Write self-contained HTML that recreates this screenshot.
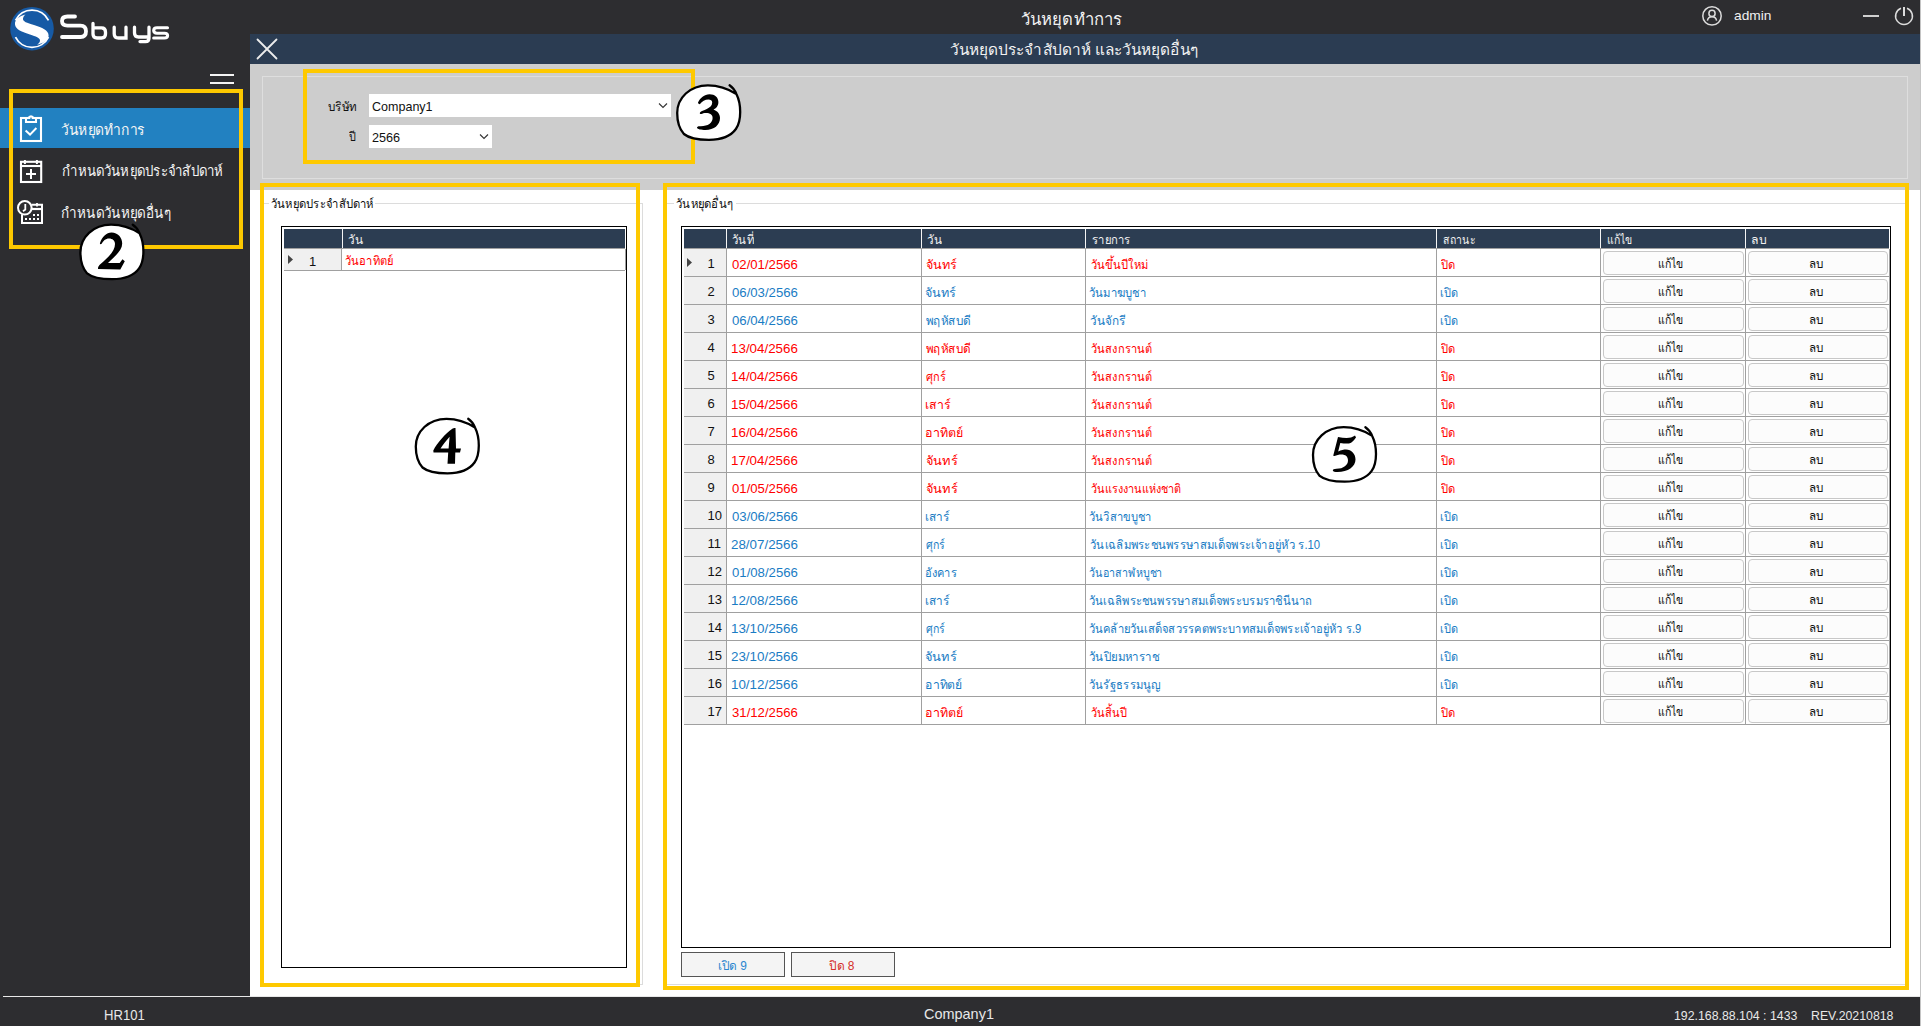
<!DOCTYPE html>
<html><head><meta charset="utf-8">
<style>
*{box-sizing:border-box;margin:0;padding:0}
html,body{width:1921px;height:1026px;overflow:hidden}
body{position:relative;background:#2d2d30;font-family:"Liberation Sans",sans-serif;color:#fff}
.a{position:absolute}
.t{position:absolute;white-space:nowrap;line-height:1}
.yb{position:absolute;border:4px solid #fec900}
</style></head><body>
<svg class="a" style="left:0;top:0" width="180" height="56" viewBox="0 0 180 56">
<circle cx="32" cy="28.7" r="21.8" fill="#165aa5"/>
<path d="M15.5 20.3 A18.4 18.4 0 0 1 48.5 20.3" fill="none" stroke="#fff" stroke-width="1.8"/>
<path d="M15.5 37.1 A18.4 18.4 0 0 0 48.5 37.1" fill="none" stroke="#fff" stroke-width="1.8"/>
<path d="M25.5 14.5 C19 16 14.5 20 15 24.5 C15.5 29.5 22 32 30 34.5 C36 36.5 40 38 40 40.5 C40 42.5 38.3 44 37 44.7 C44 43.5 48.6 39.5 48.6 35.5 C48.6 30 42 27.5 34 25 C27 23 22.5 21.5 23 18.5 C23.3 16.5 24.5 15.2 25.5 14.5 Z" fill="#fff"/>
<g fill="none" stroke="#fff" stroke-linecap="round">
<path d="M75 16.5 H67.5 Q62 16.5 62 21 Q62 25.6 67.5 25.6 H80.5 Q86 25.6 86 31.3 Q86 37 80.5 37 H62" stroke-width="3.8"/>
<path d="M93 23.5 V34 Q93 38 97 38 H101.5 Q105.5 38 105.5 34 V32 Q105.5 27.8 101.5 27.8 H93" stroke-width="3.3"/>
<path d="M114.2 27.2 V33.8 Q114.2 38 118.5 38 H126 V27.2" stroke-width="3.3"/>
<path d="M134.5 27.2 V33 Q134.5 37 138.5 37 H149 M149 27.2 V38.3 Q149 41.6 145.5 41.6 H140" stroke-width="3.3"/>
<path d="M167.5 27.8 H157 Q153.7 27.8 153.7 30.6 Q153.7 33.2 157 33.2 H164.5 Q167.6 33.2 167.6 35.6 Q167.6 38 164.5 38 H153.7" stroke-width="3.1"/>
</g></svg>
<div class="t" style="left:1020.99px;top:11px;font-size:16.5px;color:#f2f2f2;transform:scaleX(1.0101);transform-origin:0 0;">วันหยุดทำการ</div>
<svg class="a" style="left:1700px;top:4px" width="24" height="24" viewBox="1700 4 24 24" fill="none" stroke="#dcdcdc" stroke-width="1.5">
<circle cx="1712" cy="15.9" r="9.2"/><circle cx="1712" cy="13.4" r="3.1"/><path d="M1707.4 20.6 A4.7 4.7 0 0 1 1716.6 20.6"/></svg>
<div class="t" style="left:1734.49px;top:9px;font-size:13.5px;color:#f0f0f0;transform:scaleX(1.0170);transform-origin:0 0;">admin</div>
<div class="a" style="left:1863px;top:15px;width:16px;height:2px;background:#d0d0d0"></div>
<svg class="a" style="left:1892px;top:4px" width="24" height="24" viewBox="1892 4 24 24" fill="none" stroke="#dcdcdc" stroke-width="1.5">
<path d="M1901 8.2 A8.4 8.4 0 1 0 1907 8.2"/><path d="M1904 7 V16" stroke-width="2"/></svg>
<div class="a" style="left:210px;top:74px;width:24px;height:2px;background:#f4f4f4"></div>
<div class="a" style="left:210px;top:82px;width:24px;height:2px;background:#f4f4f4"></div>
<div class="a" style="left:0;top:108px;width:250px;height:40px;background:#2281c1"></div>
<svg class="a" style="left:0;top:100px" width="60" height="130" viewBox="0 100 60 130" fill="none" stroke="#fff" stroke-width="2.1">
<rect x="21" y="118" width="20" height="23"/>
<path d="M26 118 V122 H36 V118" /><path d="M28.5 118 A2.6 2.6 0 0 1 33.5 118" stroke-width="1.8"/><rect x="30.3" y="117.6" width="1.4" height="1.6" fill="#2281c1" stroke="none"/>
<path d="M25.6 130.6 L30 134.6 L36.4 128" stroke-width="2"/>
<rect x="21" y="161.8" width="20.2" height="20.2"/>
<path d="M21 166 H41"/><path d="M24.9 160 V164 M36.9 160 V164" stroke-width="2"/>
<path d="M26 174 H36 M31 169 V179" stroke-width="2"/>
<circle cx="24.8" cy="207.8" r="6.8" stroke-width="2"/>
<path d="M25.3 204 V209.5 L23 211.2" stroke-width="1.8"/>
<path d="M31.5 204.8 H42 V223 H22 V214.5" stroke-width="2"/>
<path d="M31.5 209 H42" stroke-width="2.2"/><path d="M37 203 V206.6" stroke-width="1.8"/>
</svg>
<svg class="a" style="left:20px;top:210px" width="24" height="14" viewBox="20 210 24 14" fill="#fff">
<rect x="33" y="214" width="2" height="2"/><rect x="37" y="214" width="2" height="2"/>
<rect x="25" y="218" width="2" height="2"/><rect x="29" y="218" width="2" height="2"/><rect x="33" y="218" width="2" height="2"/><rect x="37" y="218" width="2" height="2"/></svg>
<div class="t" style="left:60.64px;top:123px;font-size:14.5px;color:#f4f4f4;transform:scaleX(0.9542);transform-origin:0 0;">วันหยุดทำการ</div>
<div class="t" style="left:62.07px;top:164px;font-size:14.5px;color:#f4f4f4;transform:scaleX(0.9122);transform-origin:0 0;">กำหนดวันหยุดประจำสัปดาห์</div>
<div class="t" style="left:61.07px;top:206px;font-size:14.5px;color:#f4f4f4;transform:scaleX(0.9328);transform-origin:0 0;">กำหนดวันหยุดอื่นๆ</div>
<div class="yb" style="left:9px;top:89px;width:234px;height:160px"></div>
<div class="a" style="left:3px;top:996px;width:1918px;height:1px;background:#e8e8e8"></div>
<div class="a" style="left:250px;top:34px;width:1670px;height:30px;background:#2b3c52"></div>
<svg class="a" style="left:254px;top:36px" width="26" height="26" viewBox="254 36 26 26" stroke="#ececec" stroke-width="1.8" stroke-linecap="round">
<path d="M257.5 39.5 L276.5 58.5 M276.5 39.5 L257.5 58.5"/></svg>
<div class="t" style="left:949.60px;top:42px;font-size:15.3px;color:#f2f2f2;transform:scaleX(1.0057);transform-origin:0 0;">วันหยุดประจำสัปดาห์ และวันหยุดอื่นๆ</div>
<div class="a" style="left:250px;top:64px;width:1670px;height:126px;background:#cdcdcd"></div>
<div class="a" style="left:262px;top:76px;width:1646px;height:103px;border:1px solid #dedede"></div>
<div class="t" style="left:328.00px;top:101px;font-size:12.5px;color:#111;transform:scaleX(0.9299);transform-origin:0 0;">บริษัท</div>
<div class="t" style="left:349.14px;top:131px;font-size:12.5px;color:#111;transform:scaleX(0.8657);transform-origin:0 0;">ปี</div>
<div class="a" style="left:369px;top:94px;width:302px;height:23px;background:#fff"></div>
<div class="t" style="left:372.20px;top:100px;font-size:13px;color:#111;transform:scaleX(0.9635);transform-origin:0 0;">Company1</div>
<div class="a" style="left:369px;top:125px;width:123px;height:23px;background:#fff"></div>
<div class="t" style="left:371.70px;top:131px;font-size:13px;color:#111;transform:scaleX(0.9736);transform-origin:0 0;">2566</div>
<svg class="a" style="left:650px;top:96px" width="20" height="20" viewBox="650 96 20 20" fill="none" stroke="#333" stroke-width="1.1"><path d="M659 103.5 L663 107.5 L667 103.5"/></svg>
<svg class="a" style="left:472px;top:127px" width="20" height="20" viewBox="472 127 20 20" fill="none" stroke="#333" stroke-width="1.1"><path d="M480 134.5 L484 138.5 L488 134.5"/></svg>
<div class="yb" style="left:303px;top:69px;width:392px;height:95px"></div>
<div class="a" style="left:250px;top:190px;width:1670px;height:806px;background:#fff"></div>
<div class="a" style="left:681px;top:226px;width:1210px;height:722px;border:1px solid #000;background:#fff"></div>
<div class="a" style="left:684px;top:229px;width:1205px;height:19px;background:#2c3d52"></div>
<div class="a" style="left:726px;top:229px;width:1px;height:19px;background:#f4f4f4"></div>
<div class="a" style="left:921px;top:229px;width:1px;height:19px;background:#f4f4f4"></div>
<div class="a" style="left:1085px;top:229px;width:1px;height:19px;background:#f4f4f4"></div>
<div class="a" style="left:1436px;top:229px;width:1px;height:19px;background:#f4f4f4"></div>
<div class="a" style="left:1600px;top:229px;width:1px;height:19px;background:#f4f4f4"></div>
<div class="a" style="left:1745px;top:229px;width:1px;height:19px;background:#f4f4f4"></div>
<div class="t" style="left:732.49px;top:234px;font-size:12.5px;color:#f0f0f0;transform:scaleX(0.9139);transform-origin:0 0;">วันที่</div>
<div class="t" style="left:927.00px;top:234px;font-size:12.5px;color:#f0f0f0;transform:scaleX(0.9375);transform-origin:0 0;">วัน</div>
<div class="t" style="left:1092.00px;top:234px;font-size:12.5px;color:#f0f0f0;transform:scaleX(0.9001);transform-origin:0 0;">รายการ</div>
<div class="t" style="left:1442.95px;top:234px;font-size:12.5px;color:#f0f0f0;transform:scaleX(0.8358);transform-origin:0 0;">สถานะ</div>
<div class="t" style="left:1606.67px;top:234px;font-size:12.5px;color:#f0f0f0;transform:scaleX(0.8382);transform-origin:0 0;">แก้ไข</div>
<div class="t" style="left:1750.61px;top:234px;font-size:12.5px;color:#f0f0f0;transform:scaleX(0.9787);transform-origin:0 0;">ลบ</div>
<div class="a" style="left:684px;top:248px;width:1205px;height:1px;background:#a0a0a0"></div>
<div class="a" style="left:684px;top:249px;width:42px;height:476px;background:#f0f0f0"></div>
<div class="a" style="left:684px;top:276px;width:1205px;height:1px;background:#a0a0a0"></div>
<div class="t" style="left:707.5px;top:257px;font-size:13px;color:#111">1</div>
<div class="t" style="left:731.79px;top:258px;font-size:13px;color:#ff0000;transform:scaleX(1.0127);transform-origin:0 0;">02/01/2566</div>
<div class="t" style="left:926.03px;top:259px;font-size:12.5px;color:#ff0000;transform:scaleX(1.0088);transform-origin:0 0;">จันทร์</div>
<div class="t" style="left:1090.60px;top:259px;font-size:12.5px;color:#ff0000;transform:scaleX(0.8922);transform-origin:0 0;">วันขึ้นปีใหม่</div>
<div class="t" style="left:1441.00px;top:259px;font-size:12.5px;color:#ff0000;transform:scaleX(0.8955);transform-origin:0 0;">ปิด</div>
<div class="a" style="left:1603px;top:251px;width:141px;height:24px;border:1px solid #c8c8c8;border-radius:4px;background:#fcfcfc"></div>
<div class="a" style="left:1748px;top:251px;width:140px;height:24px;border:1px solid #c8c8c8;border-radius:4px;background:#fcfcfc"></div>
<div class="t" style="left:1658.26px;top:258px;font-size:12.5px;color:#111;transform:scaleX(0.8382);transform-origin:0 0;">แก้ไข</div>
<div class="t" style="left:1809.47px;top:258px;font-size:12.5px;color:#111;transform:scaleX(0.9286);transform-origin:0 0;">ลบ</div>
<div class="a" style="left:684px;top:304px;width:1205px;height:1px;background:#a0a0a0"></div>
<div class="t" style="left:707.5px;top:285px;font-size:13px;color:#111">2</div>
<div class="t" style="left:731.81px;top:286px;font-size:13px;color:#1a7cc4;transform:scaleX(1.0125);transform-origin:0 0;">06/03/2566</div>
<div class="t" style="left:925.00px;top:287px;font-size:12.5px;color:#1a7cc4;transform:scaleX(1.0067);transform-origin:0 0;">จันทร์</div>
<div class="t" style="left:1088.71px;top:287px;font-size:12.5px;color:#1a7cc4;transform:scaleX(0.9021);transform-origin:0 0;">วันมาฆบูชา</div>
<div class="t" style="left:1440.12px;top:287px;font-size:12.5px;color:#1a7cc4;transform:scaleX(0.8751);transform-origin:0 0;">เปิด</div>
<div class="a" style="left:1603px;top:279px;width:141px;height:24px;border:1px solid #c8c8c8;border-radius:4px;background:#fcfcfc"></div>
<div class="a" style="left:1748px;top:279px;width:140px;height:24px;border:1px solid #c8c8c8;border-radius:4px;background:#fcfcfc"></div>
<div class="t" style="left:1658.26px;top:286px;font-size:12.5px;color:#111;transform:scaleX(0.8382);transform-origin:0 0;">แก้ไข</div>
<div class="t" style="left:1809.47px;top:286px;font-size:12.5px;color:#111;transform:scaleX(0.9286);transform-origin:0 0;">ลบ</div>
<div class="a" style="left:684px;top:332px;width:1205px;height:1px;background:#a0a0a0"></div>
<div class="t" style="left:707.5px;top:313px;font-size:13px;color:#111">3</div>
<div class="t" style="left:731.81px;top:314px;font-size:13px;color:#1a7cc4;transform:scaleX(1.0125);transform-origin:0 0;">06/04/2566</div>
<div class="t" style="left:926.00px;top:315px;font-size:12.5px;color:#1a7cc4;transform:scaleX(0.9353);transform-origin:0 0;">พฤหัสบดี</div>
<div class="t" style="left:1089.67px;top:315px;font-size:12.5px;color:#1a7cc4;transform:scaleX(0.9385);transform-origin:0 0;">วันจักรี</div>
<div class="t" style="left:1440.12px;top:315px;font-size:12.5px;color:#1a7cc4;transform:scaleX(0.8751);transform-origin:0 0;">เปิด</div>
<div class="a" style="left:1603px;top:307px;width:141px;height:24px;border:1px solid #c8c8c8;border-radius:4px;background:#fcfcfc"></div>
<div class="a" style="left:1748px;top:307px;width:140px;height:24px;border:1px solid #c8c8c8;border-radius:4px;background:#fcfcfc"></div>
<div class="t" style="left:1658.26px;top:314px;font-size:12.5px;color:#111;transform:scaleX(0.8382);transform-origin:0 0;">แก้ไข</div>
<div class="t" style="left:1809.47px;top:314px;font-size:12.5px;color:#111;transform:scaleX(0.9286);transform-origin:0 0;">ลบ</div>
<div class="a" style="left:684px;top:360px;width:1205px;height:1px;background:#a0a0a0"></div>
<div class="t" style="left:707.5px;top:341px;font-size:13px;color:#111">4</div>
<div class="t" style="left:730.76px;top:342px;font-size:13px;color:#ff0000;transform:scaleX(1.0288);transform-origin:0 0;">13/04/2566</div>
<div class="t" style="left:926.00px;top:343px;font-size:12.5px;color:#ff0000;transform:scaleX(0.9345);transform-origin:0 0;">พฤหัสบดี</div>
<div class="t" style="left:1090.60px;top:343px;font-size:12.5px;color:#ff0000;transform:scaleX(0.8871);transform-origin:0 0;">วันสงกรานต์</div>
<div class="t" style="left:1441.00px;top:343px;font-size:12.5px;color:#ff0000;transform:scaleX(0.8955);transform-origin:0 0;">ปิด</div>
<div class="a" style="left:1603px;top:335px;width:141px;height:24px;border:1px solid #c8c8c8;border-radius:4px;background:#fcfcfc"></div>
<div class="a" style="left:1748px;top:335px;width:140px;height:24px;border:1px solid #c8c8c8;border-radius:4px;background:#fcfcfc"></div>
<div class="t" style="left:1658.26px;top:342px;font-size:12.5px;color:#111;transform:scaleX(0.8382);transform-origin:0 0;">แก้ไข</div>
<div class="t" style="left:1809.47px;top:342px;font-size:12.5px;color:#111;transform:scaleX(0.9286);transform-origin:0 0;">ลบ</div>
<div class="a" style="left:684px;top:388px;width:1205px;height:1px;background:#a0a0a0"></div>
<div class="t" style="left:707.5px;top:369px;font-size:13px;color:#111">5</div>
<div class="t" style="left:730.76px;top:370px;font-size:13px;color:#ff0000;transform:scaleX(1.0288);transform-origin:0 0;">14/04/2566</div>
<div class="t" style="left:926.03px;top:371px;font-size:12.5px;color:#ff0000;transform:scaleX(0.8792);transform-origin:0 0;">ศุกร์</div>
<div class="t" style="left:1090.60px;top:371px;font-size:12.5px;color:#ff0000;transform:scaleX(0.8871);transform-origin:0 0;">วันสงกรานต์</div>
<div class="t" style="left:1441.00px;top:371px;font-size:12.5px;color:#ff0000;transform:scaleX(0.8955);transform-origin:0 0;">ปิด</div>
<div class="a" style="left:1603px;top:363px;width:141px;height:24px;border:1px solid #c8c8c8;border-radius:4px;background:#fcfcfc"></div>
<div class="a" style="left:1748px;top:363px;width:140px;height:24px;border:1px solid #c8c8c8;border-radius:4px;background:#fcfcfc"></div>
<div class="t" style="left:1658.26px;top:370px;font-size:12.5px;color:#111;transform:scaleX(0.8382);transform-origin:0 0;">แก้ไข</div>
<div class="t" style="left:1809.47px;top:370px;font-size:12.5px;color:#111;transform:scaleX(0.9286);transform-origin:0 0;">ลบ</div>
<div class="a" style="left:684px;top:416px;width:1205px;height:1px;background:#a0a0a0"></div>
<div class="t" style="left:707.5px;top:397px;font-size:13px;color:#111">6</div>
<div class="t" style="left:730.76px;top:398px;font-size:13px;color:#ff0000;transform:scaleX(1.0288);transform-origin:0 0;">15/04/2566</div>
<div class="t" style="left:925.02px;top:399px;font-size:12.5px;color:#ff0000;transform:scaleX(0.9839);transform-origin:0 0;">เสาร์</div>
<div class="t" style="left:1090.60px;top:399px;font-size:12.5px;color:#ff0000;transform:scaleX(0.8871);transform-origin:0 0;">วันสงกรานต์</div>
<div class="t" style="left:1441.00px;top:399px;font-size:12.5px;color:#ff0000;transform:scaleX(0.8955);transform-origin:0 0;">ปิด</div>
<div class="a" style="left:1603px;top:391px;width:141px;height:24px;border:1px solid #c8c8c8;border-radius:4px;background:#fcfcfc"></div>
<div class="a" style="left:1748px;top:391px;width:140px;height:24px;border:1px solid #c8c8c8;border-radius:4px;background:#fcfcfc"></div>
<div class="t" style="left:1658.26px;top:398px;font-size:12.5px;color:#111;transform:scaleX(0.8382);transform-origin:0 0;">แก้ไข</div>
<div class="t" style="left:1809.47px;top:398px;font-size:12.5px;color:#111;transform:scaleX(0.9286);transform-origin:0 0;">ลบ</div>
<div class="a" style="left:684px;top:444px;width:1205px;height:1px;background:#a0a0a0"></div>
<div class="t" style="left:707.5px;top:425px;font-size:13px;color:#111">7</div>
<div class="t" style="left:730.76px;top:426px;font-size:13px;color:#ff0000;transform:scaleX(1.0288);transform-origin:0 0;">16/04/2566</div>
<div class="t" style="left:924.98px;top:427px;font-size:12.5px;color:#ff0000;transform:scaleX(0.9993);transform-origin:0 0;">อาทิตย์</div>
<div class="t" style="left:1090.60px;top:427px;font-size:12.5px;color:#ff0000;transform:scaleX(0.8871);transform-origin:0 0;">วันสงกรานต์</div>
<div class="t" style="left:1441.00px;top:427px;font-size:12.5px;color:#ff0000;transform:scaleX(0.8955);transform-origin:0 0;">ปิด</div>
<div class="a" style="left:1603px;top:419px;width:141px;height:24px;border:1px solid #c8c8c8;border-radius:4px;background:#fcfcfc"></div>
<div class="a" style="left:1748px;top:419px;width:140px;height:24px;border:1px solid #c8c8c8;border-radius:4px;background:#fcfcfc"></div>
<div class="t" style="left:1658.26px;top:426px;font-size:12.5px;color:#111;transform:scaleX(0.8382);transform-origin:0 0;">แก้ไข</div>
<div class="t" style="left:1809.47px;top:426px;font-size:12.5px;color:#111;transform:scaleX(0.9286);transform-origin:0 0;">ลบ</div>
<div class="a" style="left:684px;top:472px;width:1205px;height:1px;background:#a0a0a0"></div>
<div class="t" style="left:707.5px;top:453px;font-size:13px;color:#111">8</div>
<div class="t" style="left:730.76px;top:454px;font-size:13px;color:#ff0000;transform:scaleX(1.0288);transform-origin:0 0;">17/04/2566</div>
<div class="t" style="left:926.00px;top:455px;font-size:12.5px;color:#ff0000;transform:scaleX(1.0272);transform-origin:0 0;">จันทร์</div>
<div class="t" style="left:1090.60px;top:455px;font-size:12.5px;color:#ff0000;transform:scaleX(0.8871);transform-origin:0 0;">วันสงกรานต์</div>
<div class="t" style="left:1441.00px;top:455px;font-size:12.5px;color:#ff0000;transform:scaleX(0.8955);transform-origin:0 0;">ปิด</div>
<div class="a" style="left:1603px;top:447px;width:141px;height:24px;border:1px solid #c8c8c8;border-radius:4px;background:#fcfcfc"></div>
<div class="a" style="left:1748px;top:447px;width:140px;height:24px;border:1px solid #c8c8c8;border-radius:4px;background:#fcfcfc"></div>
<div class="t" style="left:1658.26px;top:454px;font-size:12.5px;color:#111;transform:scaleX(0.8382);transform-origin:0 0;">แก้ไข</div>
<div class="t" style="left:1809.47px;top:454px;font-size:12.5px;color:#111;transform:scaleX(0.9286);transform-origin:0 0;">ลบ</div>
<div class="a" style="left:684px;top:500px;width:1205px;height:1px;background:#a0a0a0"></div>
<div class="t" style="left:707.5px;top:481px;font-size:13px;color:#111">9</div>
<div class="t" style="left:731.79px;top:482px;font-size:13px;color:#ff0000;transform:scaleX(1.0127);transform-origin:0 0;">01/05/2566</div>
<div class="t" style="left:926.00px;top:483px;font-size:12.5px;color:#ff0000;transform:scaleX(1.0272);transform-origin:0 0;">จันทร์</div>
<div class="t" style="left:1090.60px;top:483px;font-size:12.5px;color:#ff0000;transform:scaleX(0.8690);transform-origin:0 0;">วันแรงงานแห่งชาติ</div>
<div class="t" style="left:1441.00px;top:483px;font-size:12.5px;color:#ff0000;transform:scaleX(0.8955);transform-origin:0 0;">ปิด</div>
<div class="a" style="left:1603px;top:475px;width:141px;height:24px;border:1px solid #c8c8c8;border-radius:4px;background:#fcfcfc"></div>
<div class="a" style="left:1748px;top:475px;width:140px;height:24px;border:1px solid #c8c8c8;border-radius:4px;background:#fcfcfc"></div>
<div class="t" style="left:1658.26px;top:482px;font-size:12.5px;color:#111;transform:scaleX(0.8382);transform-origin:0 0;">แก้ไข</div>
<div class="t" style="left:1809.47px;top:482px;font-size:12.5px;color:#111;transform:scaleX(0.9286);transform-origin:0 0;">ลบ</div>
<div class="a" style="left:684px;top:528px;width:1205px;height:1px;background:#a0a0a0"></div>
<div class="t" style="left:707.5px;top:509px;font-size:13px;color:#111">10</div>
<div class="t" style="left:731.81px;top:510px;font-size:13px;color:#1a7cc4;transform:scaleX(1.0125);transform-origin:0 0;">03/06/2566</div>
<div class="t" style="left:925.04px;top:511px;font-size:12.5px;color:#1a7cc4;transform:scaleX(0.9445);transform-origin:0 0;">เสาร์</div>
<div class="t" style="left:1088.72px;top:511px;font-size:12.5px;color:#1a7cc4;transform:scaleX(0.8915);transform-origin:0 0;">วันวิสาขบูชา</div>
<div class="t" style="left:1440.12px;top:511px;font-size:12.5px;color:#1a7cc4;transform:scaleX(0.8751);transform-origin:0 0;">เปิด</div>
<div class="a" style="left:1603px;top:503px;width:141px;height:24px;border:1px solid #c8c8c8;border-radius:4px;background:#fcfcfc"></div>
<div class="a" style="left:1748px;top:503px;width:140px;height:24px;border:1px solid #c8c8c8;border-radius:4px;background:#fcfcfc"></div>
<div class="t" style="left:1658.26px;top:510px;font-size:12.5px;color:#111;transform:scaleX(0.8382);transform-origin:0 0;">แก้ไข</div>
<div class="t" style="left:1809.47px;top:510px;font-size:12.5px;color:#111;transform:scaleX(0.9286);transform-origin:0 0;">ลบ</div>
<div class="a" style="left:684px;top:556px;width:1205px;height:1px;background:#a0a0a0"></div>
<div class="t" style="left:707.5px;top:537px;font-size:13px;color:#111">11</div>
<div class="t" style="left:730.79px;top:538px;font-size:13px;color:#1a7cc4;transform:scaleX(1.0281);transform-origin:0 0;">28/07/2566</div>
<div class="t" style="left:926.00px;top:539px;font-size:12.5px;color:#1a7cc4;transform:scaleX(0.8410);transform-origin:0 0;">ศุกร์</div>
<div class="t" style="left:1089.69px;top:539px;font-size:12.5px;color:#1a7cc4;transform:scaleX(0.9067);transform-origin:0 0;">วันเฉลิมพระชนพรรษาสมเด็จพระเจ้าอยู่หัว ร.10</div>
<div class="t" style="left:1440.12px;top:539px;font-size:12.5px;color:#1a7cc4;transform:scaleX(0.8751);transform-origin:0 0;">เปิด</div>
<div class="a" style="left:1603px;top:531px;width:141px;height:24px;border:1px solid #c8c8c8;border-radius:4px;background:#fcfcfc"></div>
<div class="a" style="left:1748px;top:531px;width:140px;height:24px;border:1px solid #c8c8c8;border-radius:4px;background:#fcfcfc"></div>
<div class="t" style="left:1658.26px;top:538px;font-size:12.5px;color:#111;transform:scaleX(0.8382);transform-origin:0 0;">แก้ไข</div>
<div class="t" style="left:1809.47px;top:538px;font-size:12.5px;color:#111;transform:scaleX(0.9286);transform-origin:0 0;">ลบ</div>
<div class="a" style="left:684px;top:584px;width:1205px;height:1px;background:#a0a0a0"></div>
<div class="t" style="left:707.5px;top:565px;font-size:13px;color:#111">12</div>
<div class="t" style="left:731.81px;top:566px;font-size:13px;color:#1a7cc4;transform:scaleX(1.0125);transform-origin:0 0;">01/08/2566</div>
<div class="t" style="left:925.10px;top:567px;font-size:12.5px;color:#1a7cc4;transform:scaleX(0.8862);transform-origin:0 0;">อังคาร</div>
<div class="t" style="left:1088.75px;top:567px;font-size:12.5px;color:#1a7cc4;transform:scaleX(0.8536);transform-origin:0 0;">วันอาสาฬหบูชา</div>
<div class="t" style="left:1440.12px;top:567px;font-size:12.5px;color:#1a7cc4;transform:scaleX(0.8751);transform-origin:0 0;">เปิด</div>
<div class="a" style="left:1603px;top:559px;width:141px;height:24px;border:1px solid #c8c8c8;border-radius:4px;background:#fcfcfc"></div>
<div class="a" style="left:1748px;top:559px;width:140px;height:24px;border:1px solid #c8c8c8;border-radius:4px;background:#fcfcfc"></div>
<div class="t" style="left:1658.26px;top:566px;font-size:12.5px;color:#111;transform:scaleX(0.8382);transform-origin:0 0;">แก้ไข</div>
<div class="t" style="left:1809.47px;top:566px;font-size:12.5px;color:#111;transform:scaleX(0.9286);transform-origin:0 0;">ลบ</div>
<div class="a" style="left:684px;top:612px;width:1205px;height:1px;background:#a0a0a0"></div>
<div class="t" style="left:707.5px;top:593px;font-size:13px;color:#111">13</div>
<div class="t" style="left:730.78px;top:594px;font-size:13px;color:#1a7cc4;transform:scaleX(1.0283);transform-origin:0 0;">12/08/2566</div>
<div class="t" style="left:925.04px;top:595px;font-size:12.5px;color:#1a7cc4;transform:scaleX(0.9445);transform-origin:0 0;">เสาร์</div>
<div class="t" style="left:1088.70px;top:595px;font-size:12.5px;color:#1a7cc4;transform:scaleX(0.9000);transform-origin:0 0;">วันเฉลิพระชนพรรษาสมเด็จพระบรมราชินีนาถ</div>
<div class="t" style="left:1440.12px;top:595px;font-size:12.5px;color:#1a7cc4;transform:scaleX(0.8751);transform-origin:0 0;">เปิด</div>
<div class="a" style="left:1603px;top:587px;width:141px;height:24px;border:1px solid #c8c8c8;border-radius:4px;background:#fcfcfc"></div>
<div class="a" style="left:1748px;top:587px;width:140px;height:24px;border:1px solid #c8c8c8;border-radius:4px;background:#fcfcfc"></div>
<div class="t" style="left:1658.26px;top:594px;font-size:12.5px;color:#111;transform:scaleX(0.8382);transform-origin:0 0;">แก้ไข</div>
<div class="t" style="left:1809.47px;top:594px;font-size:12.5px;color:#111;transform:scaleX(0.9286);transform-origin:0 0;">ลบ</div>
<div class="a" style="left:684px;top:640px;width:1205px;height:1px;background:#a0a0a0"></div>
<div class="t" style="left:707.5px;top:621px;font-size:13px;color:#111">14</div>
<div class="t" style="left:730.78px;top:622px;font-size:13px;color:#1a7cc4;transform:scaleX(1.0283);transform-origin:0 0;">13/10/2566</div>
<div class="t" style="left:926.00px;top:623px;font-size:12.5px;color:#1a7cc4;transform:scaleX(0.8410);transform-origin:0 0;">ศุกร์</div>
<div class="t" style="left:1088.71px;top:623px;font-size:12.5px;color:#1a7cc4;transform:scaleX(0.8931);transform-origin:0 0;">วันคล้ายวันเสด็จสวรรคตพระบาทสมเด็จพระเจ้าอยู่หัว ร.9</div>
<div class="t" style="left:1440.12px;top:623px;font-size:12.5px;color:#1a7cc4;transform:scaleX(0.8751);transform-origin:0 0;">เปิด</div>
<div class="a" style="left:1603px;top:615px;width:141px;height:24px;border:1px solid #c8c8c8;border-radius:4px;background:#fcfcfc"></div>
<div class="a" style="left:1748px;top:615px;width:140px;height:24px;border:1px solid #c8c8c8;border-radius:4px;background:#fcfcfc"></div>
<div class="t" style="left:1658.26px;top:622px;font-size:12.5px;color:#111;transform:scaleX(0.8382);transform-origin:0 0;">แก้ไข</div>
<div class="t" style="left:1809.47px;top:622px;font-size:12.5px;color:#111;transform:scaleX(0.9286);transform-origin:0 0;">ลบ</div>
<div class="a" style="left:684px;top:668px;width:1205px;height:1px;background:#a0a0a0"></div>
<div class="t" style="left:707.5px;top:649px;font-size:13px;color:#111">15</div>
<div class="t" style="left:730.79px;top:650px;font-size:13px;color:#1a7cc4;transform:scaleX(1.0281);transform-origin:0 0;">23/10/2566</div>
<div class="t" style="left:924.97px;top:651px;font-size:12.5px;color:#1a7cc4;transform:scaleX(1.0272);transform-origin:0 0;">จันทร์</div>
<div class="t" style="left:1088.67px;top:651px;font-size:12.5px;color:#1a7cc4;transform:scaleX(0.9244);transform-origin:0 0;">วันปิยมหาราช</div>
<div class="t" style="left:1440.12px;top:651px;font-size:12.5px;color:#1a7cc4;transform:scaleX(0.8751);transform-origin:0 0;">เปิด</div>
<div class="a" style="left:1603px;top:643px;width:141px;height:24px;border:1px solid #c8c8c8;border-radius:4px;background:#fcfcfc"></div>
<div class="a" style="left:1748px;top:643px;width:140px;height:24px;border:1px solid #c8c8c8;border-radius:4px;background:#fcfcfc"></div>
<div class="t" style="left:1658.26px;top:650px;font-size:12.5px;color:#111;transform:scaleX(0.8382);transform-origin:0 0;">แก้ไข</div>
<div class="t" style="left:1809.47px;top:650px;font-size:12.5px;color:#111;transform:scaleX(0.9286);transform-origin:0 0;">ลบ</div>
<div class="a" style="left:684px;top:696px;width:1205px;height:1px;background:#a0a0a0"></div>
<div class="t" style="left:707.5px;top:677px;font-size:13px;color:#111">16</div>
<div class="t" style="left:730.78px;top:678px;font-size:13px;color:#1a7cc4;transform:scaleX(1.0283);transform-origin:0 0;">10/12/2566</div>
<div class="t" style="left:925.04px;top:679px;font-size:12.5px;color:#1a7cc4;transform:scaleX(0.9709);transform-origin:0 0;">อาทิตย์</div>
<div class="t" style="left:1088.71px;top:679px;font-size:12.5px;color:#1a7cc4;transform:scaleX(0.9014);transform-origin:0 0;">วันรัฐธรรมนูญ</div>
<div class="t" style="left:1440.12px;top:679px;font-size:12.5px;color:#1a7cc4;transform:scaleX(0.8751);transform-origin:0 0;">เปิด</div>
<div class="a" style="left:1603px;top:671px;width:141px;height:24px;border:1px solid #c8c8c8;border-radius:4px;background:#fcfcfc"></div>
<div class="a" style="left:1748px;top:671px;width:140px;height:24px;border:1px solid #c8c8c8;border-radius:4px;background:#fcfcfc"></div>
<div class="t" style="left:1658.26px;top:678px;font-size:12.5px;color:#111;transform:scaleX(0.8382);transform-origin:0 0;">แก้ไข</div>
<div class="t" style="left:1809.47px;top:678px;font-size:12.5px;color:#111;transform:scaleX(0.9286);transform-origin:0 0;">ลบ</div>
<div class="a" style="left:684px;top:724px;width:1205px;height:1px;background:#a0a0a0"></div>
<div class="t" style="left:707.5px;top:705px;font-size:13px;color:#111">17</div>
<div class="t" style="left:731.79px;top:706px;font-size:13px;color:#ff0000;transform:scaleX(1.0127);transform-origin:0 0;">31/12/2566</div>
<div class="t" style="left:924.98px;top:707px;font-size:12.5px;color:#ff0000;transform:scaleX(0.9993);transform-origin:0 0;">อาทิตย์</div>
<div class="t" style="left:1090.63px;top:707px;font-size:12.5px;color:#ff0000;transform:scaleX(0.8798);transform-origin:0 0;">วันสิ้นปี</div>
<div class="t" style="left:1441.00px;top:707px;font-size:12.5px;color:#ff0000;transform:scaleX(0.8955);transform-origin:0 0;">ปิด</div>
<div class="a" style="left:1603px;top:699px;width:141px;height:24px;border:1px solid #c8c8c8;border-radius:4px;background:#fcfcfc"></div>
<div class="a" style="left:1748px;top:699px;width:140px;height:24px;border:1px solid #c8c8c8;border-radius:4px;background:#fcfcfc"></div>
<div class="t" style="left:1658.26px;top:706px;font-size:12.5px;color:#111;transform:scaleX(0.8382);transform-origin:0 0;">แก้ไข</div>
<div class="t" style="left:1809.47px;top:706px;font-size:12.5px;color:#111;transform:scaleX(0.9286);transform-origin:0 0;">ลบ</div>
<div class="a" style="left:726px;top:249px;width:1px;height:476px;background:#a0a0a0"></div>
<div class="a" style="left:921px;top:249px;width:1px;height:476px;background:#a0a0a0"></div>
<div class="a" style="left:1085px;top:249px;width:1px;height:476px;background:#a0a0a0"></div>
<div class="a" style="left:1436px;top:249px;width:1px;height:476px;background:#a0a0a0"></div>
<div class="a" style="left:1600px;top:249px;width:1px;height:476px;background:#a0a0a0"></div>
<div class="a" style="left:1745px;top:249px;width:1px;height:476px;background:#a0a0a0"></div>
<div class="a" style="left:1889px;top:249px;width:1px;height:476px;background:#a0a0a0"></div>
<svg class="a" style="left:686px;top:258px" width="8" height="10"><path d="M1 0 L6 4.5 L1 9 Z" fill="#444"/></svg>
<div class="a" style="left:681px;top:952px;width:104px;height:25px;border:1px solid #555;background:#f4f4f4"></div>
<div class="t" style="left:717.58px;top:960px;font-size:12.5px;color:#2a86cf;transform:scaleX(0.9492);transform-origin:0 0;">เปิด 9</div>
<div class="a" style="left:791px;top:952px;width:104px;height:25px;border:1px solid #555;background:#f4f4f4"></div>
<div class="t" style="left:828.90px;top:960px;font-size:12.5px;color:#d4302a;transform:scaleX(0.9588);transform-origin:0 0;">ปิด 8</div>
<div class="a" style="left:281px;top:226px;width:346px;height:742px;border:1px solid #000;background:#fff"></div>
<div class="a" style="left:284px;top:229px;width:341px;height:19px;background:#2c3d52"></div>
<div class="a" style="left:342px;top:229px;width:1px;height:19px;background:#f4f4f4"></div>
<div class="t" style="left:347.57px;top:234px;font-size:12.5px;color:#f0f0f0;transform:scaleX(0.9473);transform-origin:0 0;">วัน</div>
<div class="a" style="left:284px;top:248px;width:341px;height:1px;background:#a0a0a0"></div>
<div class="a" style="left:284px;top:249px;width:57px;height:21px;background:#f0f0f0"></div>
<div class="a" style="left:284px;top:270px;width:341px;height:1px;background:#a0a0a0"></div>
<div class="a" style="left:341px;top:249px;width:1px;height:21px;background:#a0a0a0"></div>
<div class="a" style="left:625px;top:249px;width:1px;height:21px;background:#a0a0a0"></div>
<div class="t" style="left:309px;top:255px;font-size:13px;color:#111">1</div>
<div class="t" style="left:345.40px;top:255px;font-size:12.5px;color:#ff0000;transform:scaleX(0.8925);transform-origin:0 0;">วันอาทิตย์</div>
<svg class="a" style="left:287px;top:255px" width="8" height="10"><path d="M1 0 L6 4.5 L1 9 Z" fill="#444"/></svg>
<div class="a" style="left:264px;top:203px;width:5px;height:1px;background:#dcdcdc"></div>
<div class="t" style="left:271.30px;top:198px;font-size:12.5px;color:#111;transform:scaleX(0.9009);transform-origin:0 0;">วันหยุดประจำสัปดาห์</div>
<div class="a" style="left:375px;top:203px;width:267px;height:1px;background:#dcdcdc"></div>
<div class="a" style="left:642px;top:203px;width:1px;height:782px;background:#dcdcdc"></div>
<div class="a" style="left:264px;top:984px;width:379px;height:1px;background:#dcdcdc"></div>
<div class="a" style="left:667px;top:203px;width:7px;height:1px;background:#dcdcdc"></div>
<div class="t" style="left:676.32px;top:198px;font-size:12.5px;color:#111;transform:scaleX(0.9086);transform-origin:0 0;">วันหยุดอื่นๆ</div>
<div class="a" style="left:736px;top:203px;width:1169px;height:1px;background:#dcdcdc"></div>
<div class="a" style="left:667px;top:984px;width:1238px;height:1px;background:#dcdcdc"></div>
<div class="yb" style="left:260px;top:183px;width:380px;height:804px"></div>
<div class="yb" style="left:663px;top:183px;width:1246px;height:807px"></div>
<svg class="a" style="left:0;top:0" width="1921" height="1026" viewBox="0 0 1921 1026">
<path transform="translate(79.1 223.4)" d="M60.5 10 C52 4.5 42 1.3 32 1.3 C14 1.3 1.3 14 1.3 29 C1.3 38 3.5 45 8 50 C14 55 23 55.8 33 55.8 C45 55.8 55 52 60 45 C63.5 40 64.3 34 64.3 28 C64.3 21 63 15 60.5 10 C59 6.5 57 3.5 53.7 1.3" fill="#fff" stroke="#000" stroke-width="2.3" stroke-linecap="round"/>
<path d="M100 243 C102 237 106.5 232.5 111.5 232.5 C118 232.5 122.2 237.5 122.2 243.5 C122.2 250 116 255.5 108 263 L119.7 263 L122.5 259.3 L124.8 261.3 L120.3 269.5 L98 269 C97.8 267.5 98.5 266 100 264.5 C109 257 115 250.5 115 244 C115 240.5 112.5 238.4 109 238.4 C105.5 238.4 103 241 101.8 243.5 C101.3 244.5 99.5 244.3 100 243 Z" fill="#000" fill-rule="evenodd"/>
<path transform="translate(675.9 84)" d="M60.5 10 C52 4.5 42 1.3 32 1.3 C14 1.3 1.3 14 1.3 29 C1.3 38 3.5 45 8 50 C14 55 23 55.8 33 55.8 C45 55.8 55 52 60 45 C63.5 40 64.3 34 64.3 28 C64.3 21 63 15 60.5 10 C59 6.5 57 3.5 53.7 1.3" fill="#fff" stroke="#000" stroke-width="2.3" stroke-linecap="round"/>
<path d="M698 102.5 C700 98 704.5 94.2 709.5 94.2 C715 94.2 718.4 97.5 718.4 102 C718.4 106 716 108.5 713.5 109.5 C717.5 111 720 114 720 118 C720 125 714 130 705.5 130 C701 130 697.5 129 697 127.7 C697 126.5 698.5 126 700 126.2 C707.5 126.5 712.6 123 712.6 118 C712.6 114.5 710 113 706 113 C704 113 702.5 113.5 701.3 114 C700 114 699.5 113.5 700 112.5 C702 110 712.2 109 712.2 102.5 C712.2 100.5 710.5 99.6 708.5 99.6 C705 99.6 702 101.5 700 104 C699 104.5 698 103.5 698 102.5 Z" fill="#000" fill-rule="evenodd"/>
<path transform="translate(414.5 417.5)" d="M60.5 10 C52 4.5 42 1.3 32 1.3 C14 1.3 1.3 14 1.3 29 C1.3 38 3.5 45 8 50 C14 55 23 55.8 33 55.8 C45 55.8 55 52 60 45 C63.5 40 64.3 34 64.3 28 C64.3 21 63 15 60.5 10 C59 6.5 57 3.5 53.7 1.3" fill="#fff" stroke="#000" stroke-width="2.3" stroke-linecap="round"/>
<path d="M455.5 428 L456 448.5 L461 448.5 L460 452.6 L455.3 452.6 L455 463.8 L447.5 463.8 L448.2 452.6 L433.5 452.6 L433.3 450.5 C437 443 446 433 452 429 C453 428.3 454 428 455.5 428 Z M449.6 436.8 L448.6 448.5 L440.5 448.5 C443.5 444 446.5 440.5 449.6 436.8 Z" fill="#000" fill-rule="evenodd"/>
<path transform="translate(1311.7 425.9)" d="M60.5 10 C52 4.5 42 1.3 32 1.3 C14 1.3 1.3 14 1.3 29 C1.3 38 3.5 45 8 50 C14 55 23 55.8 33 55.8 C45 55.8 55 52 60 45 C63.5 40 64.3 34 64.3 28 C64.3 21 63 15 60.5 10 C59 6.5 57 3.5 53.7 1.3" fill="#fff" stroke="#000" stroke-width="2.3" stroke-linecap="round"/>
<path d="M1338 437 C1343 438 1348 438.2 1351 437.5 C1352.5 437 1354 436 1355 435.5 L1356 437.5 C1354 440 1352 443 1349 443.5 C1346 443.8 1343 443.3 1340.3 443 L1338.2 451.5 C1341 450 1344 449.5 1346 449.5 C1351.5 449.5 1355.5 454 1355.5 459.5 C1355.5 466.5 1348 472 1337.5 472 C1335 472 1333 471.5 1332.8 470.5 C1332.8 469.5 1334 468.8 1336.5 468.8 C1343.5 468.8 1348 465 1348 460.5 C1348 456.5 1345.5 454.5 1341.5 454.5 C1339 454.5 1336.5 455.2 1334.5 456 C1333.6 456.3 1333.2 455.8 1333.4 455 Z" fill="#000" fill-rule="evenodd"/>
</svg>
<div class="t" style="left:103.68px;top:1008px;font-size:14px;color:#e8e8e8;transform:scaleX(0.9338);transform-origin:0 0;">HR101</div>
<div class="t" style="left:924.00px;top:1007px;font-size:14.5px;color:#e8e8e8;transform:scaleX(0.9973);transform-origin:0 0;">Company1</div>
<div class="t" style="left:1674.14px;top:1009px;font-size:13px;color:#e8e8e8;transform:scaleX(0.9480);transform-origin:0 0;">192.168.88.104 : 1433</div>
<div class="t" style="left:1810.54px;top:1009px;font-size:13px;color:#e8e8e8;transform:scaleX(0.9478);transform-origin:0 0;">REV.20210818</div>
<div class="a" style="left:1920px;top:0;width:1px;height:1026px;background:#c4c4c4"></div>
</body></html>
